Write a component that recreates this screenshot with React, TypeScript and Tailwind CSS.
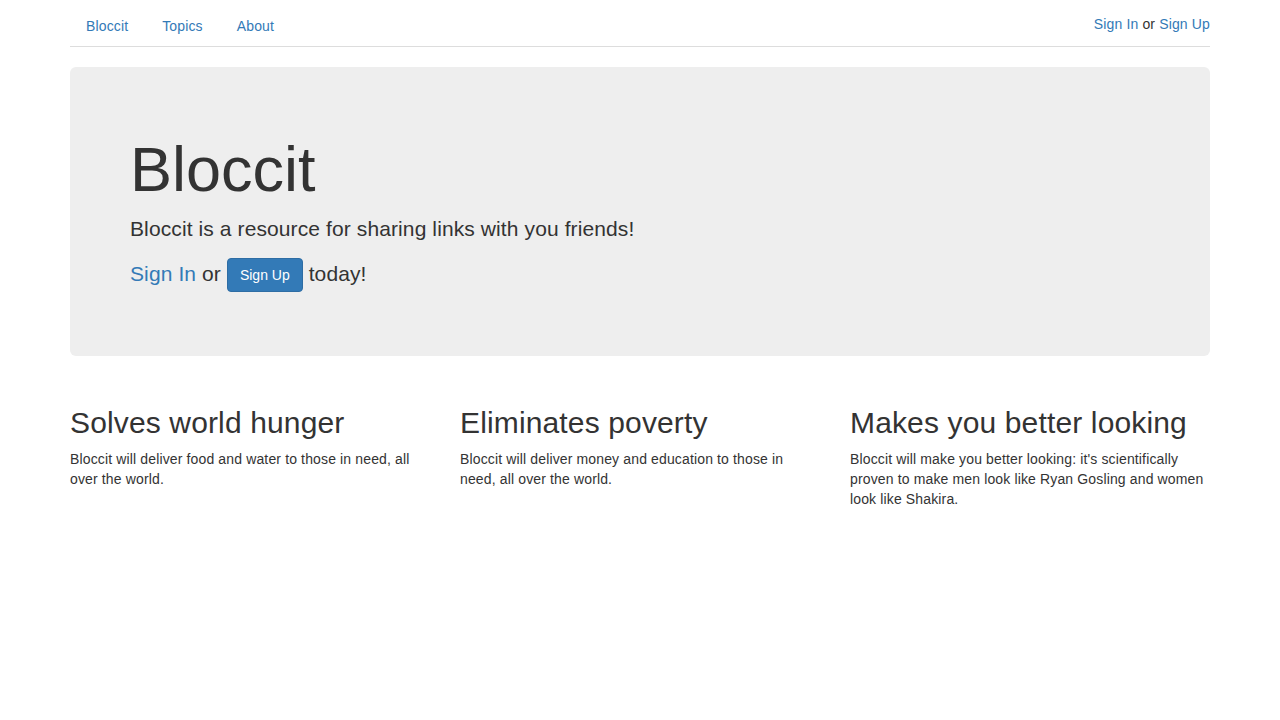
const features = [
  {
    title: 'Solves world hunger',
    body: 'Bloccit will deliver food and water to those in need, all over the world.',
  },
  {
    title: 'Eliminates poverty',
    body: 'Bloccit will deliver money and education to those in need, all over the world.',
  },
  {
    title: 'Makes you better looking',
    body: "Bloccit will make you better looking: it's scientifically proven to make men look like Ryan Gosling and women look like Shakira.",
  },
];

export default function App() {
  return (
    <div className="min-h-screen bg-white text-[14px] leading-[20px] tracking-[0.01em] text-[#333] [font-family:'Liberation_Sans',Arial,sans-serif]">
      <div className="w-[1170px] mx-auto px-[15px]">
        <div className="mt-[5px] h-[42px] border-b border-[#ddd] flex justify-between">
          <ul className="flex">
            {['Bloccit', 'Topics', 'About'].map((item) => (
              <li key={item}>
                <a href="#" className="block mr-[2px] px-[16px] py-[11px] text-[#337ab7] hover:underline">
                  {item}
                </a>
              </li>
            ))}
          </ul>
          <div className="pt-[9px]">
            <a href="#" className="text-[#337ab7]">Sign In</a> or{' '}
            <a href="#" className="text-[#337ab7]">Sign Up</a>
          </div>
        </div>

        <div className="mt-[20px] bg-[#eee] rounded-[6px] px-[60px] py-[48px]">
          <h1 className="mt-[20px] mb-[10px] text-[63px] leading-[1.1] tracking-normal">Bloccit</h1>
          <p className="-mt-[1px] mb-[15px] text-[21px] leading-[31.5px] tracking-[0.005em]">
            Bloccit is a resource for sharing links with you friends!
          </p>
          <p className="-mt-[2px] mb-[18px] text-[21px] leading-[31.5px] tracking-[0.005em]">
            <a href="#" className="text-[#337ab7]">Sign In</a> or{' '}
            <a
              href="#"
              className="inline-block align-middle -my-[2px] bg-[#337ab7] border border-[#2e6da4] rounded-[4px] px-[12px] py-[6px] text-[14px] leading-[20px] tracking-normal text-white"
            >
              Sign Up
            </a>{' '}
            today!
          </p>
        </div>

        <div className="mt-[30px] grid grid-cols-3 -mx-[15px]">
          {features.map((f) => (
            <div key={f.title} className="px-[15px]">
              <h2 className="mt-[20px] mb-[10px] text-[30px] leading-[1.1]">{f.title}</h2>
              <p className="mb-[10px]">{f.body}</p>
            </div>
          ))}
        </div>
      </div>
    </div>
  );
}
